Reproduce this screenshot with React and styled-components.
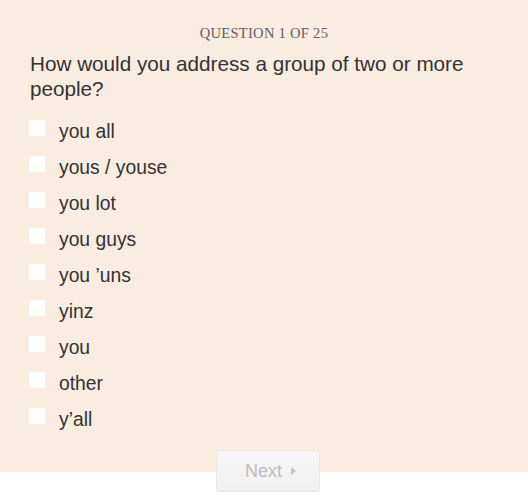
import React from "react";
import styled, { createGlobalStyle } from "styled-components";

const Global = createGlobalStyle`
  html, body { margin: 0; padding: 0; background: #ffffff; }
  body { font-family: "Liberation Sans", Arial, sans-serif; }
`;

const Page = styled.div`
  width: 528px;
  height: 502px;
  position: relative;
  background: #ffffff;
`;

const Panel = styled.div`
  background: #f9ece0;
  height: 472px;
  box-sizing: border-box;
  padding: 25px 30px 0 30px;
`;

const Kicker = styled.div`
  font-family: "Liberation Serif", "Times New Roman", serif;
  font-size: 14.5px;
  color: #606060;
  text-align: center;
  letter-spacing: 0.3px;
  line-height: 16px;
`;

const Question = styled.h2`
  margin: 10px 0 0 0;
  font-weight: normal;
  font-size: 20.7px;
  line-height: 25px;
  color: #333333;
`;

const Options = styled.ul`
  list-style: none;
  margin: 19px 0 0 0;
  padding: 0;
  display: flex;
  flex-direction: column;
  gap: 14px;
`;

const Option = styled.li`
  display: flex;
  align-items: flex-start;
  gap: 14px;
  height: 22px;
  margin-left: -1px;
`;

const Box = styled.span`
  width: 16px;
  height: 16px;
  background: #ffffff;
  border-radius: 2px;
  flex: none;
`;

const Label = styled.span`
  font-size: 19.3px;
  color: #333333;
  line-height: 22px;
  margin-top: 1px;
`;

const Footer = styled.div`
  position: absolute;
  left: 0;
  right: 0;
  top: 450px;
  display: flex;
  justify-content: center;
`;

const NextButton = styled.button`
  width: 104px;
  height: 42px;
  margin-left: 7px;
  border: 1px solid #e8e8e8;
  border-radius: 3px;
  background: linear-gradient(#f6f6f6, #f0f0f0);
  color: #bcbcbc;
  font-family: "Liberation Sans", Arial, sans-serif;
  font-size: 18px;
  display: flex;
  align-items: center;
  justify-content: center;
  gap: 9px;
  padding: 0 0 0 6px;
`;

const Arrow = styled.svg`
  width: 5px;
  height: 8px;
  flex: none;
`;

const options = [
  "you all",
  "yous / youse",
  "you lot",
  "you guys",
  "you \u2019uns",
  "yinz",
  "you",
  "other",
  "y\u2019all",
];

export default function App() {
  return (
    <Page>
      <Global />
      <Panel>
        <Kicker>QUESTION 1 OF 25</Kicker>
        <Question>How would you address a group of two or more people?</Question>
        <Options>
          {options.map((o) => (
            <Option key={o}>
              <Box />
              <Label>{o}</Label>
            </Option>
          ))}
        </Options>
      </Panel>
      <Footer>
        <NextButton disabled>
          <span>Next</span>
          <Arrow viewBox="0 0 5 8">
            <path d="M0 0 L5 4 L0 8 Z" fill="#c4c4c4" />
          </Arrow>
        </NextButton>
      </Footer>
    </Page>
  );
}
